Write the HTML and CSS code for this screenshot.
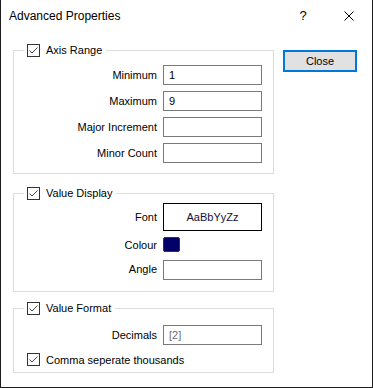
FILE: index.html
```html
<!DOCTYPE html>
<html lang="en">
  <head>
    <meta charset="UTF-8" />
    <title>Advanced Properties</title>
    <link rel="stylesheet" href="styles.css">
  </head>
  <body>
    <div class="dialog">
      <div class="titlebar">
        <span class="title">Advanced Properties</span>
        <span class="title-button help">?</span>
        <span class="title-button">
          <svg width="10" height="10" viewBox="0 0 10 10">
            <path d="M0.5 0.5 L9.5 9.5 M9.5 0.5 L0.5 9.5" stroke="#000" stroke-width="1" fill="none" />
          </svg>
        </span>
      </div>

      <div class="content">
        <div class="groups">
          <fieldset class="group axis-group">
            <legend class="group-title">
              <span class="check">
                <svg width="11" height="11" viewBox="0 0 11 11">
                  <path d="M1.5 5.5 L4 8 L9.5 2.5" stroke="#444" stroke-width="1" fill="none" />
                </svg>
              </span>
              Axis Range
            </legend>
            <div class="rows">
              <label class="label">Minimum</label>
              <div class="field">1</div>
              <label class="label">Maximum</label>
              <div class="field">9</div>
              <label class="label">Major Increment</label>
              <div class="field"></div>
              <label class="label">Minor Count</label>
              <div class="field"></div>
            </div>
          </fieldset>

          <fieldset class="group display-group">
            <legend class="group-title">
              <span class="check">
                <svg width="11" height="11" viewBox="0 0 11 11">
                  <path d="M1.5 5.5 L4 8 L9.5 2.5" stroke="#444" stroke-width="1" fill="none" />
                </svg>
              </span>
              Value Display
            </legend>
            <div class="rows display-rows">
              <label class="label">Font</label>
              <div class="font-box">AaBbYyZz</div>
              <label class="label">Colour</label>
              <div><span class="swatch"></span></div>
              <label class="label">Angle</label>
              <div class="field"></div>
            </div>
          </fieldset>

          <fieldset class="group format-group">
            <legend class="group-title">
              <span class="check">
                <svg width="11" height="11" viewBox="0 0 11 11">
                  <path d="M1.5 5.5 L4 8 L9.5 2.5" stroke="#444" stroke-width="1" fill="none" />
                </svg>
              </span>
              Value Format
            </legend>
            <div class="rows">
              <label class="label">Decimals</label>
              <div class="field muted">[2]</div>
            </div>
            <div class="check-row">
              <span class="check">
                <svg width="11" height="11" viewBox="0 0 11 11">
                  <path d="M1.5 5.5 L4 8 L9.5 2.5" stroke="#444" stroke-width="1" fill="none" />
                </svg>
              </span>
              Comma seperate thousands
            </div>
          </fieldset>
        </div>

        <button class="close-button">Close</button>
      </div>
    </div>
  </body>
</html>
```

FILE: styles.css
```css
body {
  margin: 0;
  background-color: white;
  font-family: "Liberation Sans", Arial, sans-serif;
  font-size: 11px;
  color: black;
}

.dialog {
  width: 373px;
  height: 388px;
  box-sizing: border-box;
  border: 1px solid #1e1e1e;
  border-top: none;
  background-color: white;
}

.titlebar {
  height: 31px;
  display: flex;
  align-items: center;
  padding-left: 8px;
  font-size: 12px;
}

.title {
  flex: 1;
}

.title-button {
  width: 46px;
  height: 31px;
  display: flex;
  align-items: center;
  justify-content: center;
}

.help {
  font-size: 13px;
}

.content {
  display: flex;
  align-items: flex-start;
  padding: 13px 0 0 12px;
}

.groups {
  width: 261px;
}

.group {
  margin: 0;
  padding: 0 11px 10px 0;
  border: 1px solid #dcdcdc;
  min-width: 0;
}

.group-title {
  margin-left: 10px;
  padding: 0 4px 0 3px;
  height: 13px;
  line-height: 13px;
  display: flex;
  align-items: center;
  gap: 6px;
}

.check {
  width: 11px;
  height: 11px;
  border: 1px solid #333;
  background-color: white;
  display: inline-block;
}

.check svg {
  display: block;
}

.rows {
  display: grid;
  grid-template-columns: 1fr 99px;
  column-gap: 6px;
  row-gap: 6px;
  align-items: center;
}

.axis-group .rows {
  padding-top: 8px;
}

.label {
  text-align: right;
}

.field {
  height: 20px;
  box-sizing: border-box;
  border: 1px solid #7a7a7a;
  background-color: white;
  padding: 0 5px;
  line-height: 18px;
}

.muted {
  color: #6d6d6d;
}

.display-group {
  margin-top: 13px;
  padding-bottom: 11px;
}

.display-rows {
  padding-top: 3px;
}

.font-box {
  height: 28px;
  box-sizing: border-box;
  border: 1px solid black;
  text-align: center;
  line-height: 26px;
  color: #10103a;
}

.swatch {
  display: block;
  width: 17px;
  height: 15px;
  box-sizing: border-box;
  border: 1px solid #333;
  border-radius: 2px;
  background-color: #000066;
}

.display-rows .field {
  margin-top: 2px;
}

.format-group {
  margin-top: 10px;
  padding-bottom: 6px;
}

.format-group .rows {
  padding-top: 10px;
}

.check-row {
  display: flex;
  align-items: center;
  gap: 6px;
  margin: 8px 0 0 13px;
  height: 13px;
}

.close-button {
  margin: 6px 0 0 9px;
  width: 74px;
  height: 22px;
  background-color: #e1e1e1;
  border: 2px solid #0078d7;
  font-family: "Liberation Sans", Arial, sans-serif;
  font-size: 11px;
  color: black;
  padding: 0;
}
```
